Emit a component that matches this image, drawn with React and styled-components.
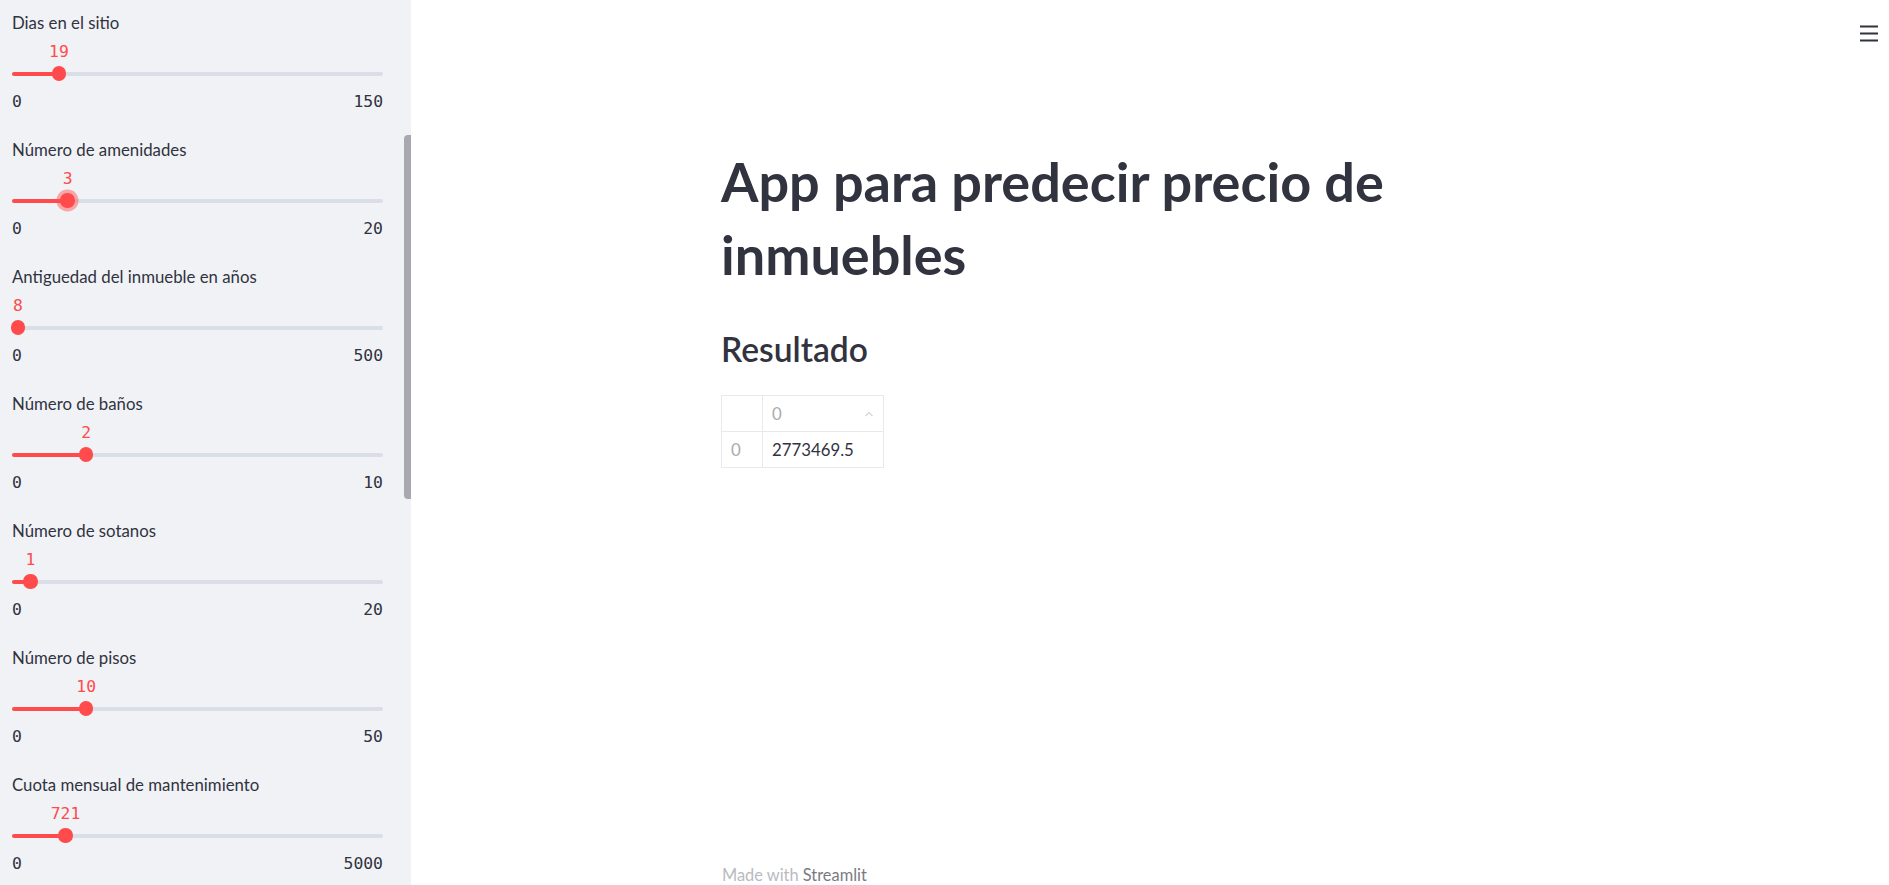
import React from 'react'
import styled, { createGlobalStyle } from 'styled-components'

const GlobalStyle = createGlobalStyle`
  html, body {
    margin: 0;
    padding: 0;
    background: #fff;
  }
  body {
    font-family: "Source Sans Pro", Lato, "Noto Sans", sans-serif;
    color: rgb(49, 51, 63);
  }
`;

const sliders = [
  { label: 'Dias en el sitio', value: 19, max: 150 },
  { label: 'Número de amenidades', value: 3, max: 20, focused: true },
  { label: 'Antiguedad del inmueble en años', value: 8, max: 500 },
  { label: 'Número de baños', value: 2, max: 10 },
  { label: 'Número de sotanos', value: 1, max: 20 },
  { label: 'Número de pisos', value: 10, max: 50 },
  { label: 'Cuota mensual de mantenimiento', value: 721, max: 5000 },
]

const Shell = styled.div`
  display: flex;
  height: 100vh;
  overflow: hidden;
`;

const Sidebar = styled.aside`
  position: relative;
  flex: 0 0 411px;
  box-sizing: border-box;
  background: #f0f2f6;
  padding: 11px 28px 0 12px;
  display: flex;
  flex-direction: column;
  gap: 26px;
  overflow: hidden;
`;

const ScrollThumb = styled.div`
  position: absolute;
  right: 0;
  top: 135px;
  width: 7px;
  height: 364px;
  background: #a7a8b0;
  border-radius: 4px 0 0 4px;
`;

const SliderBlock = styled.div`
  display: flex;
  flex-direction: column;
`;

const Label = styled.label`
  font-size: 16.8px;
  line-height: 24px;
  height: 24px;
  color: rgb(49, 51, 63);
`;

const Rail = styled.div`
  position: relative;
  margin-top: 7px;
  height: 44px;
`;

const Track = styled.div`
  position: absolute;
  left: 0;
  right: 0;
  bottom: 10.5px;
  height: 4px;
  border-radius: 2px;
  background: #dadee7;
`;

const Fill = styled.div`
  height: 100%;
  border-radius: 2px;
  background: #ff4b4b;
`;

const ThumbSpot = styled.div`
  position: absolute;
  bottom: 12.5px;
  width: 0;
  height: 0;
`;

const Thumb = styled.div`
  position: absolute;
  left: -7.2px;
  top: -7.2px;
  width: 14.4px;
  height: 14.4px;
  border-radius: 50%;
  background: #ff4b4b;
  box-shadow: ${p => (p.$focused ? '0 0 0 3.5px rgba(255, 75, 75, 0.45)' : 'none')};
`;

const ThumbValue = styled.div`
  position: absolute;
  bottom: 11.5px;
  left: 0;
  transform: translateX(-50%);
  font-family: "DejaVu Sans Mono", "Liberation Mono", monospace;
  font-size: 16.4px;
  line-height: 20px;
  color: #ff4b4b;
  white-space: nowrap;
`;

const TickRow = styled.div`
  display: flex;
  justify-content: space-between;
  margin-top: 6px;
  font-family: "DejaVu Sans Mono", "Liberation Mono", monospace;
  font-size: 16.4px;
  line-height: 20px;
  color: rgb(49, 51, 63);
`;

const Main = styled.main`
  position: relative;
  flex: 1;
  display: flex;
  flex-direction: column;
  padding-left: 310px;
`;

const MenuButton = styled.button`
  position: absolute;
  top: 20px;
  right: 6px;
  background: none;
  border: none;
  padding: 4px;
  cursor: pointer;
  display: flex;
`;

const Content = styled.div`
  padding-top: 144.5px;
  width: 858px;
`;

const Title = styled.h1`
  margin: 0;
  font-size: 54px;
  line-height: 73px;
  font-weight: 700;
  color: rgb(49, 51, 63);
`;

const SubTitle = styled.h2`
  margin: 36.5px 0 0;
  font-size: 33.6px;
  line-height: 44px;
  font-weight: 600;
  color: rgb(49, 51, 63);
`;

const Table = styled.table`
  margin-top: 24px;
  border-collapse: collapse;
  border: 1px solid #e8e9ec;
  font-size: 16.8px;
`;

const Cell = styled.td`
  box-sizing: border-box;
  height: 36px;
  width: ${p => (p.$index ? '41px' : '121px')};
  padding: 0 9px;
  border: 1px solid #e8e9ec;
  color: ${p => (p.$muted ? '#aaabb1' : 'rgb(49, 51, 63)')};
  vertical-align: middle;
`;

const HeadCell = styled(Cell).attrs({ as: 'th' })`
  font-weight: 400;
  text-align: left;
`;

const HeadInner = styled.div`
  display: flex;
  align-items: center;
  justify-content: space-between;
`;

const Footer = styled.footer`
  margin-top: auto;
  padding: 0 0 0 1px;
  font-size: 16.4px;
  line-height: 20px;
  color: #b9babf;
`;

const FooterBrand = styled.span`
  color: #7a7b82;
`;

const Slider = ({ label, value, max, focused }) => {
  const pct = (value / max) * 100
  return (
    <SliderBlock>
      <Label>{label}</Label>
      <Rail>
        <Track>
          <Fill style={{ width: `${pct}%` }} />
        </Track>
        <ThumbSpot style={{ left: `${pct}%` }}>
          <ThumbValue>{value}</ThumbValue>
          <Thumb $focused={focused} />
        </ThumbSpot>
      </Rail>
      <TickRow>
        <span>0</span>
        <span>{max}</span>
      </TickRow>
    </SliderBlock>
  )
}

const App = () => {
  return (
    <Shell>
      <GlobalStyle />
      <Sidebar>
        {sliders.map(s => <Slider key={s.label} {...s} />)}
        <ScrollThumb />
      </Sidebar>
      <Main>
        <MenuButton aria-label="menu">
          <svg width="20" height="18" viewBox="0 0 20 18">
            <rect x="1" y="1.5" width="18" height="2" fill="#31333f" />
            <rect x="1" y="8.5" width="18" height="2" fill="#31333f" />
            <rect x="1" y="15.5" width="18" height="2" fill="#31333f" />
          </svg>
        </MenuButton>
        <Content>
          <Title>App para predecir precio de inmuebles</Title>
          <SubTitle>Resultado</SubTitle>
          <Table>
            <thead>
              <tr>
                <HeadCell $index />
                <HeadCell $muted>
                  <HeadInner>
                    <span>0</span>
                    <svg width="10" height="6" viewBox="0 0 10 6">
                      <path d="M1.5 5 L5 1.5 L8.5 5" fill="none" stroke="#d6d7db" strokeWidth="1.4" />
                    </svg>
                  </HeadInner>
                </HeadCell>
              </tr>
            </thead>
            <tbody>
              <tr>
                <Cell $index $muted>0</Cell>
                <Cell>2773469.5</Cell>
              </tr>
            </tbody>
          </Table>
        </Content>
        <Footer>
          Made with <FooterBrand>Streamlit</FooterBrand>
        </Footer>
      </Main>
    </Shell>
  )
}

export default App
